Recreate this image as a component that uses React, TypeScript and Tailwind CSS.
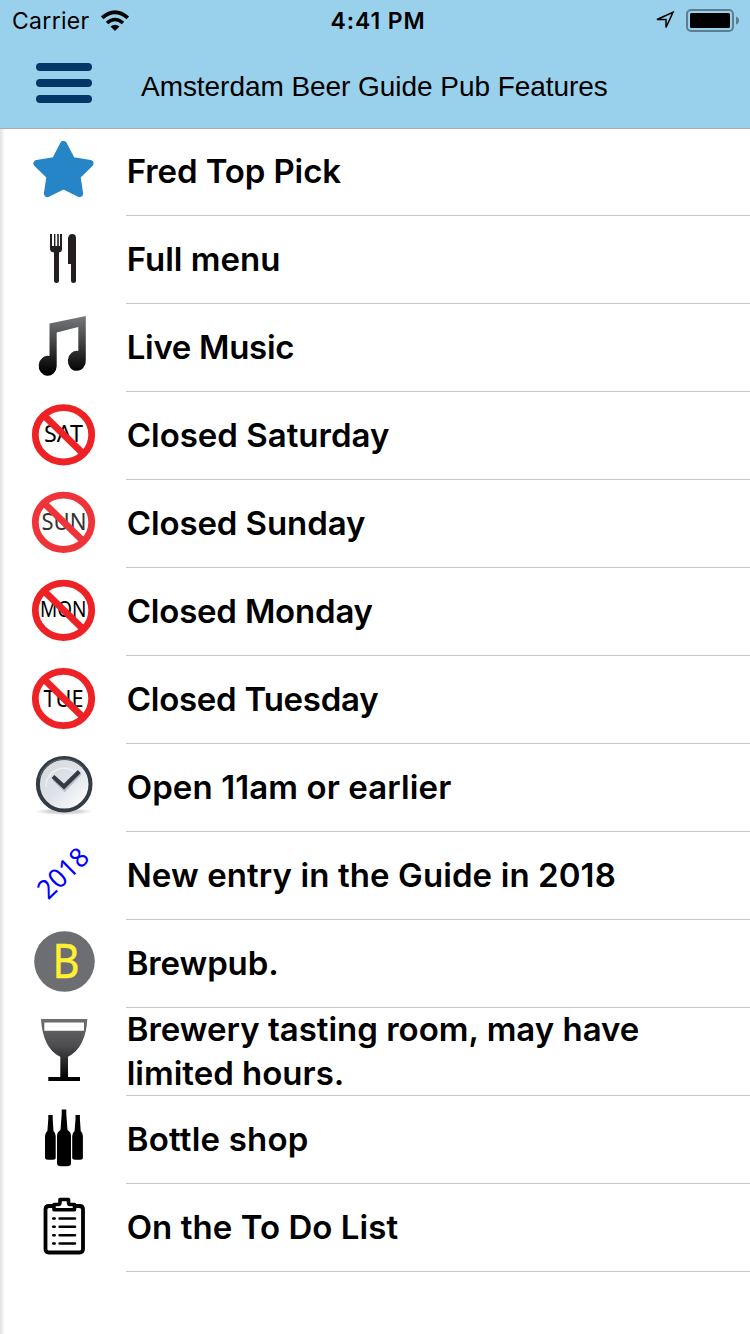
import type { ReactNode } from 'react';

type Feature = { label: ReactNode; tracking: string; icon: ReactNode };

function NoSign({ cy, text, x, baseline, width, size, red = '#ee2125', ink = '#000' }: {
  cy: number; text: string; x: number; baseline: number; width: number; size: number; red?: string; ink?: string;
}) {
  return (
    <g>
      <text x={x} y={baseline} textLength={width} lengthAdjust="spacingAndGlyphs" fontSize={size} fill={ink} className="font-['Noto_Sans',sans-serif]">{text}</text>
      <ellipse cx="63.5" cy={cy + 0.3} rx="28.2" ry="27.2" fill="none" stroke={red} strokeWidth="6.800" />
      <path d={`M43.5 ${cy - 19.5} L83.5 ${cy + 19.5}`} stroke={red} strokeWidth="6.800" />
    </g>
  );
}

const features: Feature[] = [
  {
    label: 'Fred Top Pick', tracking: 'tracking-[-0.1px]',
    icon: <path d="M63.5 144.3 71.8 160.4 90 163.4 77 176.2 79.6 193.6 63.5 185.5 47.4 193.6 50 176.2 37 163.4 55.2 160.4Z" fill="#2585c7" stroke="#2585c7" strokeWidth="7" strokeLinejoin="round" />,
  },
  {
    label: 'Full menu', tracking: 'tracking-[0px]',
    icon: (
      <g fill="#231f20">
        <path d="M50 234h2v12h2v-12h1.400v12h1.800v-12h1.600v12h1.200v-12h2v15q0 3-3 3.500V281q0 2-2.500 2t-2.500-2v-28.500q-4-.5-4-3.500z" />
        <path d="M68 238q1-4 4-4 4 0 4 4v43q0 2-2.500 2t-2.500-2v-17h-3z" />
      </g>
    ),
  },
  {
    label: 'Live Music', tracking: 'tracking-[-0.3px]',
    icon: (
      <g>
        <defs>
          <linearGradient id="note" gradientUnits="userSpaceOnUse" x1="0" y1="316" x2="0" y2="372">
            <stop offset="0" stopColor="#77787b" /><stop offset=".55" stopColor="#3a3a3c" /><stop offset="1" stopColor="#000" />
          </linearGradient>
        </defs>
        <path fill="url(#note)" d="M49.500 323.500 85.800 316V360A9 10 0 1 1 78.300 351V327L56.700 332.500V366A9 10 0 1 1 49.500 356Z" />
      </g>
    ),
  },
  { label: 'Closed Saturday', tracking: 'tracking-[0px]', icon: <NoSign cy={434.5} text="SAT" x={44} baseline={441.5} width={39} size={24} /> },
  { label: 'Closed Sunday', tracking: 'tracking-[-0.1px]', icon: <NoSign cy={522} text="SUN" x={41.5} baseline={530.2} width={45} size={23.5} red="#ee3439" ink="#333" /> },
  { label: 'Closed Monday', tracking: 'tracking-[-0.2px]', icon: <NoSign cy={610} text="MON" x={40} baseline={617.3} width={46.5} size={21} /> },
  { label: 'Closed Tuesday', tracking: 'tracking-[-0.25px]', icon: <NoSign cy={698.2} text="TUE" x={43.5} baseline={707.2} width={40} size={23} /> },
  {
    label: 'Open 11am or earlier', tracking: 'tracking-[0.1px]',
    icon: (
      <g>
        <defs>
          <linearGradient id="face" x1="0" y1="0" x2="1" y2="1">
            <stop offset="0" stopColor="#d3d7db" /><stop offset=".5" stopColor="#dfe3e9" /><stop offset=".8" stopColor="#f5f7f9" /><stop offset="1" stopColor="#d5d9de" />
          </linearGradient>
          <radialGradient id="shade"><stop offset=".5" stopColor="#999" stopOpacity=".45" /><stop offset="1" stopColor="#999" stopOpacity="0" /></radialGradient>
        </defs>
        <ellipse cx="64" cy="811.500" rx="29" ry="3.500" fill="url(#shade)" />
        <circle cx="64.200" cy="784.300" r="26.300" fill="url(#face)" stroke="#343b45" strokeWidth="4" />
        <path d="M39.500 778A25.500 25.500 0 0 1 84 768.500" fill="none" stroke="#6d747e" strokeWidth=".8" />
        <path d="M46 787a18 18 0 0 1 32-12" fill="none" stroke="#eceff2" strokeWidth="1.500" />
        <path d="M54 779.500 64.500 790 80.500 773.500" fill="none" stroke="#9ea3ab" strokeWidth="3" opacity=".6" />
        <path d="M53 776.500 64 786.500 79.300 771.500" fill="none" stroke="#343b45" strokeWidth="4.200" />
      </g>
    ),
  },
  {
    label: 'New entry in the Guide in 2018', tracking: 'tracking-[0.1px]',
    icon: <text transform="translate(48.300 900.800) rotate(-44.500)" textLength="59.500" lengthAdjust="spacingAndGlyphs" fontSize="27" fill="#00f" className="font-['Noto_Sans',sans-serif]">2018</text>,
  },
  {
    label: 'Brewpub.', tracking: 'tracking-[-0.1px]',
    icon: (
      <g>
        <circle cx="64.500" cy="961.500" r="30.300" fill="#6d6e71" />
        <text x="52.400" y="977.500" fontSize="47" textLength="27" lengthAdjust="spacingAndGlyphs" fill="#fff033" stroke="#fff033" strokeWidth=".5" className="font-['Noto_Sans',sans-serif]">B</text>
      </g>
    ),
  },
  {
    label: <>Brewery tasting room, may have<br />limited hours.</>, tracking: 'tracking-[0px]',
    icon: (
      <g>
        <defs>
          <linearGradient id="glass" gradientUnits="userSpaceOnUse" x1="0" y1="1019" x2="0" y2="1078">
            <stop offset="0" stopColor="#6d6e71" /><stop offset=".45" stopColor="#4d4d4f" /><stop offset=".75" stopColor="#262627" /><stop offset="1" stopColor="#000" />
          </linearGradient>
        </defs>
        <path fill="url(#glass)" d="M41 1019H87.300C86.500 1037 80 1051 68 1056.700V1077H80V1081H48.300V1077H60.300V1056.700C48 1051 42 1037 41 1019Z" />
        <path fill="#fff" d="M44.300 1022.500H84V1030.700H44.300Z" />
      </g>
    ),
  },
  {
    label: 'Bottle shop', tracking: 'tracking-[0.2px]',
    icon: (
      <g>
        <path d="M61.700 1109.500H66.300V1114L67.500 1130Q71 1132 71 1136V1163Q71 1166.300 67 1166.300H61Q57 1166.300 57 1163V1136Q57 1132 60.500 1130L61.700 1114Z" />
        <path id="side-bottle" d="M48.300 1115H52.700V1119L53.500 1131Q55.700 1133 55.700 1136V1157.500Q55.700 1159.700 53 1159.700H48Q45 1159.700 45 1157.500V1136Q45 1133 47.400 1131L48.300 1119Z" />
        <use href="#side-bottle" x="27.200" />
      </g>
    ),
  },
  {
    label: 'On the To Do List', tracking: 'tracking-[0.05px]',
    icon: (
      <g fill="none" stroke="#000">
        <path d="M53 1206H49Q45.500 1206 45.500 1209.500V1249Q45.500 1252.500 49 1252.500H79.500Q83 1252.500 83 1249V1209.500Q83 1206 79.500 1206H76" strokeWidth="3.800" />
        <path d="M54 1209.700V1204.500H58.500Q60 1204.500 60 1202V1199.500H68.500V1202Q68.500 1204.500 70 1204.500H74.500V1209.700Z" strokeWidth="3.600" strokeLinejoin="round" />
        <path d="M53.200 1218.500h1.500m4.900 0h15.400M53.200 1226.800h1.500m4.900 0h15.400M53.200 1235.200h1.500m4.900 0h15.400M53.200 1243.500h1.500m4.900 0h15.400" strokeWidth="2.500" strokeLinecap="round" />
      </g>
    ),
  },
];

function StatusBar() {
  return (
    <div className="grid h-10 grid-cols-3 items-center pt-px text-[23px] leading-10 text-black">
      <div className="flex items-center pl-[12px]">
        <span className="w-[89px] tracking-[0.3px]">Carrier</span>
        <svg className="h-[22px] w-[29px]" viewBox="101 9 29 22">
          <g fill="none" stroke="#000">
            <path d="M102.200 16.800Q115 5.500 127.800 16.800" strokeWidth="3.800" />
            <path d="M107 22Q115 15 123 22" strokeWidth="3.600" />
          </g>
          <path d="M110.500 25.500Q115 22 119.500 25.500L115 30Z" />
        </svg>
      </div>
      <div className="pl-[6px] text-center font-semibold tracking-[0.9px]">4:41 PM</div>
      <div className="flex items-center justify-end pr-[10px]">
        <svg className="h-7 w-[88px]" viewBox="652 7 88 28">
          <path d="M657 19.500 673 12.300 666 27.500V19.500Z" fill="none" stroke="#000" strokeWidth="1.500" />
          <rect x="687" y="10" width="46" height="21" rx="4" fill="none" stroke="#5c7e8e" strokeWidth="2" />
          <rect x="690" y="13" width="40" height="15" rx="1.500" />
          <path d="M736 16.500Q739 17.500 739 20.500T736 24.500Z" fill="#5c7e8e" />
        </svg>
      </div>
    </div>
  );
}

export default function App() {
  return (
    <div className="flex h-[1334px] w-[750px] flex-col overflow-hidden bg-white font-['Inter',sans-serif]">
      <header className="h-[129px] shrink-0 border-b border-[#a9adb0] bg-[#99d1ec]">
        <StatusBar />
        <div className="flex h-[88px] items-center">
          <button aria-label="Menu" className="mb-[2px] ml-9 flex w-14 flex-col gap-2">
            <span className="h-2 rounded-full bg-[#043667]" />
            <span className="h-2 rounded-full bg-[#043667]" />
            <span className="h-2 rounded-full bg-[#043667]" />
          </button>
          <h1 className="ml-[49px] pt-[5px] font-['Liberation_Sans',sans-serif] text-[28px] leading-8 tracking-[-0.05px] whitespace-nowrap">Amsterdam Beer Guide Pub Features</h1>
        </div>
      </header>
      <main className="flex-1 bg-[linear-gradient(to_right,#e2e2e2,#fff_5px)]">
        <ul className="-mt-px">
          {features.map((feature, i) => (
            <li key={i} className="flex h-[88px]">
              <svg className="h-[88px] w-[126px] shrink-0" viewBox={`0 ${128 + i * 88} 126 88`}>{feature.icon}</svg>
              <div className="flex flex-1 items-center border-b border-[#c8c7cc] pb-px pl-[0.7px]">
                <span className={`text-[33px] leading-[44px] font-semibold whitespace-nowrap text-black ${feature.tracking}`}>{feature.label}</span>
              </div>
            </li>
          ))}
        </ul>
      </main>
    </div>
  );
}
